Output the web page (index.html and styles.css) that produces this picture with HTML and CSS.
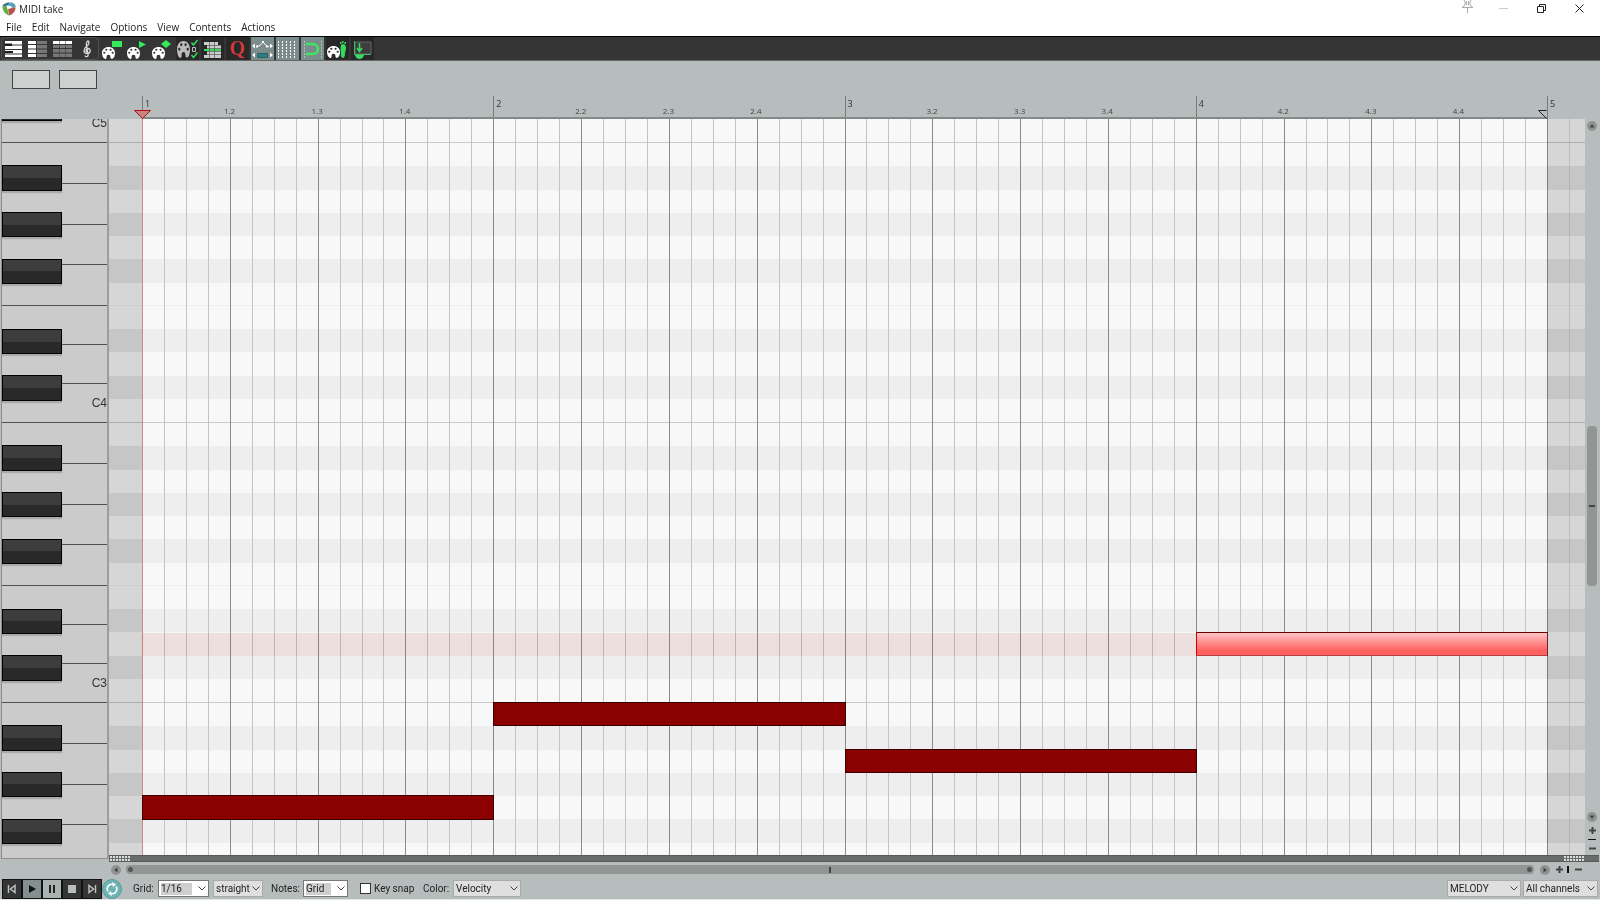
FILE: index.html
```html
<!DOCTYPE html>
<html lang="en">
<head>
    <meta charset="UTF-8">
    <meta name="viewport" content="width=device-width, initial-scale=1.0">
    <title>MIDI take</title>
    <link rel="stylesheet" href="styles.css">
</head>
<body>
    <svg class="defs" aria-hidden="true">
        <symbol id="palette" viewBox="0 0 13 13" preserveAspectRatio="none">
            <path fill-rule="evenodd" d="M6.5 0C2.8 0 0 2.6 0 6.3c0 3 1 5.600 2.500 6.500 1.600.5 2.100-.6 2.100-1.800 0-1.600.6-2.500 1.900-2.500s1.900.9 1.900 2.300c0 1.300.6 2.200 2 1.900C12 12 13 9.500 13 6.500 13 2.600 10.200 0 6.500 0zM4.300 1.800a1.100 1.100 0 1 1 0 2.200 1.100 1.100 0 0 1 0-2.200zm4.300 0a1.100 1.100 0 1 1 0 2.200 1.100 1.100 0 0 1 0-2.200zM2.300 5.200a1.100 1.100 0 1 1 0 2.200 1.100 1.100 0 0 1 0-2.200zm8.400 0a1.100 1.100 0 1 1 0 2.200 1.100 1.100 0 0 1 0-2.200z"/>
        </symbol>
        <symbol id="chevron" viewBox="0 0 8 5">
            <path d="M.5.5 4 4 7.500.5" fill="none" stroke="#444"/>
        </symbol>
    </svg>

    <header class="titlebar">
        <svg class="logo" width="14" height="14" viewBox="0 0 14 14">
            <path d="M.5 4C1.500 1.500 5 0 8 .5L5 5z" fill="#2f7684"/>
            <path d="M8 .5c4 0 6 2 5.500 5L9 6 5 4z" fill="#58a3b5"/>
            <path d="M.5 4L5 5l2 8.500C3 12 0 8 .5 4z" fill="#5fae3a"/>
            <path d="M6 6l7.500-.5c0 4-3 7-6.500 8z" fill="#b8534a"/>
            <path d="M4 3.500l5 .5 1 2-4 1z" fill="#fff"/>
        </svg>
        <h1>MIDI take</h1>
        <div class="window-controls">
            <button type="button" class="pin" aria-label="Pin window">
                <svg width="13" height="13" viewBox="0 0 13 13" fill="none" stroke="#aaa"><path d="M3 0l1 2v3L1 7.500h11L9 5V2l1-2M5.500 1v4M7.500 1v4M6.500 8v5"/></svg>
            </button>
            <button type="button" aria-label="Minimize">
                <svg width="9" height="9" viewBox="0 0 9 9" stroke="#ccc"><path d="M0 4.500h9"/></svg>
            </button>
            <button type="button" aria-label="Restore">
                <svg width="9" height="9" viewBox="0 0 9 9" fill="none" stroke="#222"><path d="M.5 2.500h6v6h-6zM2.500 2V.5h6v6H7"/></svg>
            </button>
            <button type="button" aria-label="Close">
                <svg width="9" height="9" viewBox="0 0 9 9" stroke="#222"><path d="M.5.5l8 8M8.500.5l-8 8"/></svg>
            </button>
        </div>
    </header>

    <nav class="menu">
        <a href="#">File</a>
        <a href="#">Edit</a>
        <a href="#">Navigate</a>
        <a href="#">Options</a>
        <a href="#">View</a>
        <a href="#">Contents</a>
        <a href="#">Actions</a>
    </nav>

    <div class="toolbar">
        <div class="view-modes">
            <button type="button" aria-label="Piano roll view">
                <svg viewBox="0 0 23 24" fill="#fff"><path d="M4 4h17v3.500H4zM4 8.500h17V12H4zM4 13h17v3.500H4zM4 17.500h17V20H4z"/><path d="M4 6.500h7v2.500H4zM4 14h8v2H4z" fill="#1b1b1b"/></svg>
            </button>
            <button type="button" aria-label="Named notes view">
                <svg viewBox="0 0 23 24"><path d="M2 4h8v3H2zM2 8h8v3.500H2zM2 12.500h8V16H2zM2 17h8v3H2z" fill="#fff"/><path d="M11 4h10v3H11zM11 8h10v3.500H11zM11 12.500h10V16H11zM11 17h10v3H11z" fill="#777"/></svg>
            </button>
            <button type="button" aria-label="Event list view">
                <svg viewBox="0 0 23 24"><path d="M2 4h6v3H2zM8.500 4h6v3h-6zM15 4h6v3h-6z" fill="#fff"/><path d="M2 8h6v3H2zM8.500 8h6v3h-6zM15 8h6v3h-6zM2 12h6v3.500H2zM8.500 12h6v3.500h-6zM15 12h6v3.500h-6zM2 16.500h6V20H2zM8.500 16.500h6V20h-6zM15 16.500h6V20h-6z" fill="#777"/></svg>
            </button>
            <button type="button" aria-label="Notation view">
                <svg viewBox="0 0 23 24" fill="none" stroke="#ddd" stroke-width="1.300"><path d="M11 15c-2-1-1-3.500 1-3.500 3 0 3 5-.5 5-4.500 0-4.500-4.500-1-7C14 7 13 4 12 4s-2 2-1.500 5l1.700 8.500c.3 2.500-3 2.800-3.200 1"/></svg>
            </button>
        </div>
        <button type="button" aria-label="Color notes by velocity">
            <svg viewBox="0 0 23 24" fill="#fff"><use href="#palette" x="1" y="10" width="13" height="12"/><path d="M11 4h10v6H11z" fill="#35e95c"/></svg>
        </button>
        <button type="button" aria-label="Color notes by channel">
            <svg viewBox="0 0 23 24" fill="#fff"><use href="#palette" x="1" y="10" width="13" height="12"/><path d="M13 4l7 3.500-7 3.500z" fill="#35e95c"/></svg>
        </button>
        <button type="button" aria-label="Color notes by pitch">
            <svg viewBox="0 0 23 24" fill="#fff"><use href="#palette" x="1" y="10" width="13" height="12"/><path d="M10 7l5-4 5 4-5 4z" fill="#35e95c"/></svg>
        </button>
        <button type="button" class="dark" aria-label="Filter events">
            <svg viewBox="0 0 23 24" fill="#bbb"><use href="#palette" x="1" y="4" width="13" height="17"/><path d="M16.500 10.500h3v4h-3z" fill="none" stroke="#bbb"/><path d="M15.500 5.500l2 2.500 4-5M15.500 18l2 2.500 4-5" fill="none" stroke="#35d95c" stroke-width="1.500"/></svg>
        </button>
        <button type="button" class="dark" aria-label="Track list">
            <svg viewBox="0 0 23 24" fill="#ccc"><path d="M3 5h14v3H3zM6 8.500h14v3H6zM6 14.500h14v3H6zM3 18h17v3H3z"/><path d="M3 12h17v2H3z" fill="#35d95c"/><path d="M8.500 5v16M13.500 5v16" stroke="#444" stroke-width=".6"/></svg>
        </button>
        <button type="button" class="dark quantize" aria-label="Quantize">Q</button>
        <button type="button" class="active" aria-label="Note and CC handles">
            <svg viewBox="0 0 23 24" fill="none" stroke="#fff"><path d="M6 9.500l3-1L12 5l4 4.500h2"/><g fill="#fff" stroke="none"><path d="M1 9l3-2.500v5zM22 9l-3-2.500v5zM1 18l3-2.500v5zM22 18l-3-2.500v5zM5 8.500h2v2H5zM11 4h2v2h-2zM15 8.500h2v2h-2z"/></g><path d="M6.500 16.500h10v4h-10z" fill="#2f7f82" stroke="#285f62"/></svg>
        </button>
        <button type="button" class="active" aria-label="Show grid">
            <svg viewBox="0 0 23 24" stroke="#fff" stroke-dasharray="2 1"><path d="M2.500 4v17M6.500 4v17M10.500 4v17M14.500 4v17M18.500 4v17"/></svg>
        </button>
        <button type="button" class="active" aria-label="Snap to grid">
            <svg viewBox="0 0 23 24" fill="none"><path d="M3.500 4v17M20.500 4v17" stroke="#a9c4b8" stroke-dasharray="2 1"/><path d="M5 7h6.500c3 0 5.500 2 5.500 5s-2.500 5-5.500 5H5" stroke="#3fe85c" stroke-width="2.500"/></svg>
        </button>
        <button type="button" class="dark" aria-label="Step input">
            <svg viewBox="0 0 23 24" fill="#fff"><use href="#palette" x="1" y="9" width="13" height="12"/><path d="M15 8c2-2 5-1 5 3 0 3-1 3-1 6 0 5-4 5-4 1 0-3-1-7 0-10z" fill="#35d95c"/><path d="M14 5h1.500v2H14zM16 4h1.500v2H16zM18.500 5H20v2h-1.500z" fill="#35d95c"/></svg>
        </button>
        <button type="button" class="dark" aria-label="Dock editor">
            <svg viewBox="0 0 23 24" fill="none"><path d="M4 5h16v12H4z" fill="#3d3d3d" stroke="#666"/><path d="M3.500 4v13.500H20" stroke="#3bbd60"/><path d="M8.500 6v8M6 11l2.500 3.500L11 11" stroke="#3bd968" stroke-width="1.500"/><path d="M4 18h9c-1 3-2.500 4-4.500 4S5 21 4 18z" fill="#3bd968"/></svg>
        </button>
    </div>

    <main class="editor">
        <div class="corner">
            <button type="button" aria-label="Track filter"></button>
            <button type="button" aria-label="Channel filter"></button>
        </div>
        <div class="ruler">
            <div class="measures" id="ruler-measures"></div>
            <div class="ruler-end"><span>5</span></div>
            <svg class="start-marker" width="17" height="9" viewBox="0 0 17 9"><path d="M.5.5h16l-8 8z" fill="#c98383" stroke="#b01010"/></svg>
            <svg class="end-marker" width="9" height="9" viewBox="0 0 9 9"><path d="M8.500.5h-8l8 8" fill="none" stroke="#222"/></svg>
        </div>

        <div class="keyboard" id="keyboard"></div>

        <div class="roll-column">
            <div class="roll">
                <div class="rows" id="rows"></div>
                <div class="lines">
                    <div class="lead"></div>
                    <div class="measures" id="grid-measures"></div>
                    <div class="tail"><i></i></div>
                </div>
                <div class="notes">
                    <div class="cursor"></div>
                    <div class="highlight"></div>
                    <div class="note note-1"></div>
                    <div class="note note-2"></div>
                    <div class="note note-3"></div>
                    <div class="note note-4 selected"></div>
                </div>
            </div>
            <div class="lane-divider"><i></i><i></i></div>
        </div>

        <div class="vscroll">
            <button type="button" class="round" aria-label="Scroll up"><svg viewBox="0 0 10 10"><path d="M2.500 6.500h5L5 3z"/></svg></button>
            <div class="vtrack"><div class="vthumb"></div></div>
            <button type="button" class="round" aria-label="Scroll down"><svg viewBox="0 0 10 10"><path d="M2.500 3.500h5L5 7z"/></svg></button>
            <button type="button" class="zoom" aria-label="Zoom in vertically"><svg viewBox="0 0 9 9"><path d="M1 4.500h7M4.500 1v7"/></svg></button>
            <div class="vbar"></div>
            <button type="button" class="zoom" aria-label="Zoom out vertically"><svg viewBox="0 0 9 9"><path d="M1 4.500h7"/></svg></button>
        </div>

        <div class="hscroll">
            <button type="button" class="round" aria-label="Scroll left"><svg viewBox="0 0 10 10"><path d="M6.500 2.500v5L3 5z"/></svg></button>
            <div class="hthumb"><i class="dot"></i><i class="mid"></i><i class="dot"></i></div>
            <button type="button" class="round" aria-label="Scroll right"><svg viewBox="0 0 10 10"><path d="M3.500 2.500v5L7 5z"/></svg></button>
            <button type="button" class="zoom" aria-label="Zoom in"><svg viewBox="0 0 9 9"><path d="M1 4.500h7M4.500 1v7"/></svg></button>
            <div class="hbar"></div>
            <button type="button" class="zoom" aria-label="Zoom out"><svg viewBox="0 0 9 9"><path d="M1 4.500h7"/></svg></button>
        </div>
    </main>

    <footer class="bottombar">
        <div class="transport">
            <button type="button" aria-label="Go to start"><svg viewBox="0 0 20 20" fill="none" stroke="#b9bfbe" stroke-width="1.500"><path d="M6.500 6v8M13 6.500v7L8.500 10z"/></svg></button>
            <button type="button" class="lit play" aria-label="Play"><svg viewBox="0 0 20 20" fill="#111"><path d="M7 6l7 4-7 4z"/></svg></button>
            <button type="button" class="lit" aria-label="Pause"><svg viewBox="0 0 20 20" fill="#222"><path d="M7 6h2v8H7zM11 6h2v8h-2z"/></svg></button>
            <button type="button" aria-label="Stop"><svg viewBox="0 0 20 20" fill="#b9bfbe"><path d="M6 6h8v8H6z"/></svg></button>
            <button type="button" aria-label="Go to end"><svg viewBox="0 0 20 20" fill="none" stroke="#b9bfbe" stroke-width="1.500"><path d="M13.500 6v8M7 6.500v7l4.500-3.500z"/></svg></button>
            <button type="button" class="repeat" aria-label="Repeat"><svg viewBox="0 0 20 20" fill="none" stroke="#fff" stroke-width="1.500"><path d="M6 12.500A4.500 4.500 0 0 1 11 5.600M14 7.500A4.500 4.500 0 0 1 9 14.400"/><path d="M10 3l4 2.500L11 8zM10 17l-4-2.500L9 12z" fill="#fff" stroke="none"/></svg></button>
        </div>
        <label for="grid-size">Grid:</label>
        <span class="select edit grid-size"><select id="grid-size"><option>1/16</option></select><svg><use href="#chevron"/></svg></span>
        <span class="select grid-type"><select aria-label="Grid type"><option>straight</option></select><svg><use href="#chevron"/></svg></span>
        <label for="note-size">Notes:</label>
        <span class="select edit note-size"><select id="note-size"><option>Grid</option></select><svg><use href="#chevron"/></svg></span>
        <input type="checkbox" id="key-snap"><label for="key-snap" class="snap-label">Key snap</label>
        <label for="color">Color:</label>
        <span class="select color"><select id="color"><option>Velocity</option></select><svg><use href="#chevron"/></svg></span>
        <span class="select track"><select aria-label="Track"><option>MELODY</option></select><svg><use href="#chevron"/></svg></span>
        <span class="select channel"><select aria-label="Channel"><option>All channels</option></select><svg><use href="#chevron"/></svg></span>
    </footer>

    <script>
        const keyboard = document.getElementById('keyboard');
        const rows = document.getElementById('rows');
        const rulerMeasures = document.getElementById('ruler-measures');
        const gridMeasures = document.getElementById('grid-measures');
        const blackKeys = [1, 3, 5, 8, 10];

        // one block per octave, B at the top down to C
        for (let octave = 5; octave >= 2; octave--) {
            let black = '';
            let pitches = '';
            for (let i = 0; i < 12; i++) {
                const isBlack = blackKeys.includes(i);
                black += isBlack ? '<i class="black"></i>' : '<i></i>';
                pitches += isBlack ? '<i class="sharp"></i>' : '<i></i>';
            }
            // the lowest octave is cut off above its C
            const label = octave > 2 ? 'C' + octave : '';
            keyboard.innerHTML += `
                <div class="octave">
                    <div class="whites">
                        <div class="upper"><i></i><i></i><i></i><i></i></div>
                        <div class="lower"><i></i><i></i><i>${label}</i></div>
                    </div>
                    <div class="blacks">${black}</div>
                </div>`;
            rows.innerHTML += `<div class="octave">${pitches}</div>`;
        }

        for (let m = 1; m <= 4; m++) {
            let labels = '';
            let beats = '';
            for (let b = 1; b <= 4; b++) {
                labels += b === 1 ? `<div class="beat first">${m}</div>` : `<div class="beat"><span>${m}.${b}</span></div>`;
                beats += '<div class="beat"><i></i><i></i><i></i><i></i></div>';
            }
            rulerMeasures.innerHTML += `<div class="measure">${labels}</div>`;
            gridMeasures.innerHTML += `<div class="measure">${beats}</div>`;
        }
    </script>
</body>
</html>
```

FILE: styles.css
```css
* {
    box-sizing: border-box;
}

body {
    margin: 0;
    height: 100vh;
    display: flex;
    flex-direction: column;
    overflow: hidden;
    background-color: #b7bdbc;
    color: #222;
    font-family: "Open Sans", "Noto Sans", sans-serif;
    font-size: 10px;
}

button {
    padding: 0;
    border: none;
    background: none;
    display: flex;
    align-items: center;
    justify-content: center;
}

.defs {
    display: none;
}

/* title bar and menu */
.titlebar {
    display: flex;
    align-items: center;
    height: 18px;
    padding-left: 2px;
    background-color: #fff;
}

.titlebar h1 {
    margin: 0 0 0 3px;
    font-size: 10px;
    font-weight: normal;
}

.window-controls {
    display: flex;
    margin-left: auto;
    margin-right: 2px;
}

.window-controls button {
    width: 38px;
    height: 18px;
    padding-bottom: 2px;
}

.window-controls .pin {
    width: 34px;
    padding-bottom: 6px;
}

.menu {
    display: flex;
    align-items: center;
    gap: 10px;
    height: 18px;
    padding-left: 6px;
    background-color: #fff;
}

.menu a {
    color: #222;
    text-decoration: none;
}

/* toolbar */
.toolbar {
    display: flex;
    gap: 2px;
    height: 25px;
    padding-left: 1px;
    background-color: #353535;
    border-top: 1px solid #000;
    border-bottom: 1px solid #666;
}

.toolbar button {
    width: 23px;
    height: 23px;
}

.toolbar svg {
    width: 23px;
    height: 24px;
}

.view-modes {
    display: flex;
    gap: 2px;
    border-radius: 4px;
    box-shadow: inset 0 0 0 1px #505050;
}

.toolbar .dark {
    background-color: #282828;
}

.toolbar .active {
    background-color: #7b8c8d;
}

.quantize {
    color: #d03a3a;
    font: bold 20px "Liberation Serif", serif;
}

/* editor */
.editor {
    flex: 1;
    min-height: 0;
    display: grid;
    grid-template-columns: 108px 1fr 15px;
    grid-template-rows: 58px 1fr 15px;
    padding-left: 1px;
}

.corner {
    display: flex;
    gap: 9px;
    padding: 9px 0 0 11px;
}

.corner button {
    width: 38px;
    height: 19px;
    background-color: #cdd0cf;
    border: 1px solid #444;
}

.ruler {
    grid-column: 2 / 4;
    position: relative;
    display: flex;
    align-items: flex-end;
    padding: 0 15px 0 33px;
}

.ruler .measures {
    height: 23px;
    border-bottom: 2px solid #838a89;
}

.measures {
    flex: 1;
    display: flex;
}

.measure,
.beat {
    flex: 1;
    display: flex;
    min-width: 0;
}

.ruler .measure,
.ruler-end {
    border-left: 1px solid #777c7b;
}

.ruler .beat {
    color: #444;
    font-size: 8px;
    line-height: 10px;
}

.ruler .beat span {
    width: 16px;
    height: 10px;
    margin: 10px 0 0 -9px;
    text-align: center;
}

.ruler .first,
.ruler-end span {
    text-indent: 2px;
    color: #333;
    font-size: 9px;
    line-height: 16px;
}

.ruler-end {
    width: 38px;
    height: 23px;
    display: flex;
}

.start-marker {
    position: absolute;
    left: 25px;
    bottom: 0;
}

.end-marker {
    position: absolute;
    right: 53px;
    bottom: 0;
}

.octave {
    flex: none;
    height: 280px;
    display: grid;
}

.octave:first-child {
    margin-top: -256px;
}

.keyboard {
    display: flex;
    flex-direction: column;
    overflow: hidden;
    margin-bottom: 3px;
    background-color: #cbcbcb;
    border-right: 2px solid #9a9e9d;
    border-bottom: 1px solid #8b8f8e;
    border-left: 1px solid #8b8f8e;
}

.whites,
.blacks {
    grid-area: 1 / 1;
}

.whites,
.upper,
.lower {
    display: flex;
    flex-direction: column;
}

.upper {
    flex: 7;
}

.lower {
    flex: 5;
}

.whites i {
    flex: 1;
    display: flex;
    align-items: center;
    justify-content: flex-end;
    border-bottom: 1px solid #505050;
    color: #333;
    font: 12px "Liberation Sans", Arial, sans-serif;
}

.blacks {
    display: grid;
    grid-template-rows: repeat(12, 1fr);
    width: 60px;
}

.black {
    margin: -1px 0;
    background: linear-gradient(#3d3d3d 50%, #292929 50%);
    border: 1px solid #000;
    box-shadow: 0 2px 1px #aaa;
}

.roll-column {
    display: flex;
    flex-direction: column;
    min-height: 0;
}

.roll {
    flex: 1;
    min-height: 0;
    overflow: hidden;
    display: grid;
    grid-template-rows: 100%;
}

.rows,
.lines,
.notes {
    grid-area: 1 / 1;
}

.rows {
    display: flex;
    flex-direction: column;
    background-color: #f8f8f8;
}

.rows .octave {
    grid-template-rows: repeat(12, 1fr);
    border-bottom: 1px solid #c9c9c9;
}

.rows i:nth-child(7) {
    border-bottom: 1px solid #efefef;
}

.sharp {
    background: linear-gradient(90deg, #e6e6e6 33px, #eee 33px calc(100% - 38px), #e6e6e6 calc(100% - 38px));
}

.lines {
    display: flex;
}

.lead,
.tail {
    width: 33px;
    background-color: rgba(80, 80, 80, 0.2);
    mix-blend-mode: multiply;
}

.tail {
    width: 38px;
    border-left: 1px solid #888;
}

.tail i {
    display: block;
    width: 22px;
    height: 100%;
    border-right: 1px solid #c4c4c4;
}

.lines .measure i {
    flex: 1;
    border-left: 1px solid #c4c4c4;
}

.lines .measure i:first-child {
    border-left-color: #8a8a8a;
}

.notes {
    display: grid;
    grid-template-columns: 33px repeat(4, 1fr) 38px;
    grid-template-rows: repeat(48, 1fr);
    height: 1120px;
    margin-top: -256px;
}

.cursor {
    grid-area: 1 / 2 / -1 / 3;
    border-left: 1px solid #c98a8a;
}

.highlight {
    grid-area: 34 / 2 / 35 / 5;
    background-color: rgba(180, 80, 80, 0.15);
}

.note {
    background-color: #8b0000;
    border: 1px solid #3c0000;
    margin: -1px -1px 0 0;
}

.note-1 {
    grid-area: 41 / 2;
}

.note-2 {
    grid-area: 37 / 3;
}

.note-3 {
    grid-area: 39 / 4;
}

.note-4 {
    grid-area: 34 / 5;
}

.note.selected {
    background: linear-gradient(#ffc4c4, #ff6060 80%);
    border-color: #700000 #b05050 #b04040 #d00000;
}

.lane-divider {
    display: flex;
    justify-content: space-between;
    height: 7px;
    margin-right: -14px;
    padding: 1px 15px 1px 1px;
    background: linear-gradient(#565a5a 1px, #686d6c 1px 6px, #565a5a 6px);
}

.lane-divider i {
    width: 20px;
    background:
        linear-gradient(transparent 2px, #686d6c 2px 3px, transparent 3px),
        repeating-linear-gradient(90deg, #ddd 0 2px, transparent 2px 3px);
}

/* scroll bars */
.vscroll {
    display: flex;
    flex-direction: column;
    align-items: center;
    padding: 2px 1px 9px 0;
}

.round {
    flex: none;
    width: 10px;
    height: 10px;
    border-radius: 5px;
    background-color: #8f9493;
    fill: #444;
}

.round svg {
    width: 10px;
    height: 10px;
}

.zoom svg {
    width: 9px;
    height: 9px;
    stroke: #444;
    stroke-width: 2px;
}

.vtrack {
    flex: 1;
    display: flex;
    flex-direction: column;
    margin: 2px 0;
}

.vtrack::before {
    content: "";
    flex: 293;
}

.vtrack::after {
    content: "";
    flex: 224;
}

.vthumb {
    flex: 159;
    display: flex;
    align-items: center;
    justify-content: center;
    width: 10px;
    border-radius: 4px;
    background-color: #919695;
}

.vthumb::before {
    content: "";
    width: 6px;
    height: 2px;
    background-color: #444;
}

.vscroll .zoom {
    margin-top: 4px;
}

.vbar {
    width: 8px;
    height: 1px;
    margin-top: 4px;
    background-color: #111;
}

.hscroll {
    grid-column: 2 / 4;
    display: flex;
    align-items: center;
    padding: 0 17px 0 2px;
}

.hthumb {
    flex: 1;
    display: flex;
    align-items: center;
    justify-content: space-between;
    height: 9px;
    margin: 0 6px 0 5px;
    padding: 0 2px;
    border-radius: 4px;
    background-color: #919695;
}

.dot {
    width: 5px;
    height: 5px;
    border-radius: 3px;
    background-color: #555;
}

.mid {
    width: 2px;
    height: 6px;
    background-color: #444;
}

.hscroll .zoom {
    margin-left: 5px;
}

.hbar {
    width: 2px;
    height: 7px;
    margin-left: 3px;
    background-color: #111;
}

/* bottom bar */
.bottombar {
    display: flex;
    align-items: center;
    height: 23px;
    padding: 1px 2px 0;
    border-bottom: 1px solid #e4e6e6;
    font-family: Roboto, "Liberation Sans", sans-serif;
    font-size: 10px;
}

.transport {
    display: flex;
    margin-right: 11px;
}

.transport button {
    width: 20px;
    height: 20px;
    border: 1px solid #111;
    background-color: #353535;
}

.transport svg {
    flex: none;
    width: 20px;
    height: 20px;
}

.transport .lit {
    background-color: #a9b3b2;
}

.transport .play {
    background-color: #84908f;
}

.transport .repeat {
    border: 1px solid #5b9a9a;
    border-radius: 10px;
    background-color: #6db3b3;
}

.bottombar label {
    width: 25px;
    white-space: nowrap;
}

.select {
    position: relative;
    display: flex;
    height: 17px;
    margin-right: 4px;
}

.select select {
    width: 100%;
    padding: 0 0 0 2px;
    appearance: none;
    border: 1px solid #aaa;
    border-radius: 0;
    background-color: #dfdfdf;
    color: #222;
    font: inherit;
}

.select svg {
    position: absolute;
    right: 3px;
    top: 6px;
    width: 8px;
    height: 5px;
    pointer-events: none;
}

.edit select {
    border-color: #777;
    background: #fff linear-gradient(#cfcfcf, #cfcfcf) 2px 2px / calc(100% - 18px) 12px no-repeat;
}

.grid-size {
    width: 51px;
}

.grid-type {
    width: 50px;
    margin-right: 8px;
}

.bottombar label[for="note-size"] {
    width: 32px;
}

.note-size {
    width: 45px;
    margin-right: 12px;
}

#key-snap {
    appearance: none;
    width: 11px;
    height: 11px;
    margin: 0 3px 0 0;
    border: 1px solid #333;
    background-color: #fff;
}

.bottombar .snap-label {
    width: 49px;
}

.bottombar label[for="color"] {
    width: 30px;
}

.color {
    width: 68px;
}

.track {
    width: 74px;
    margin: 0 2px 0 auto;
}

.channel {
    width: 75px;
    margin-right: 0;
}
```
